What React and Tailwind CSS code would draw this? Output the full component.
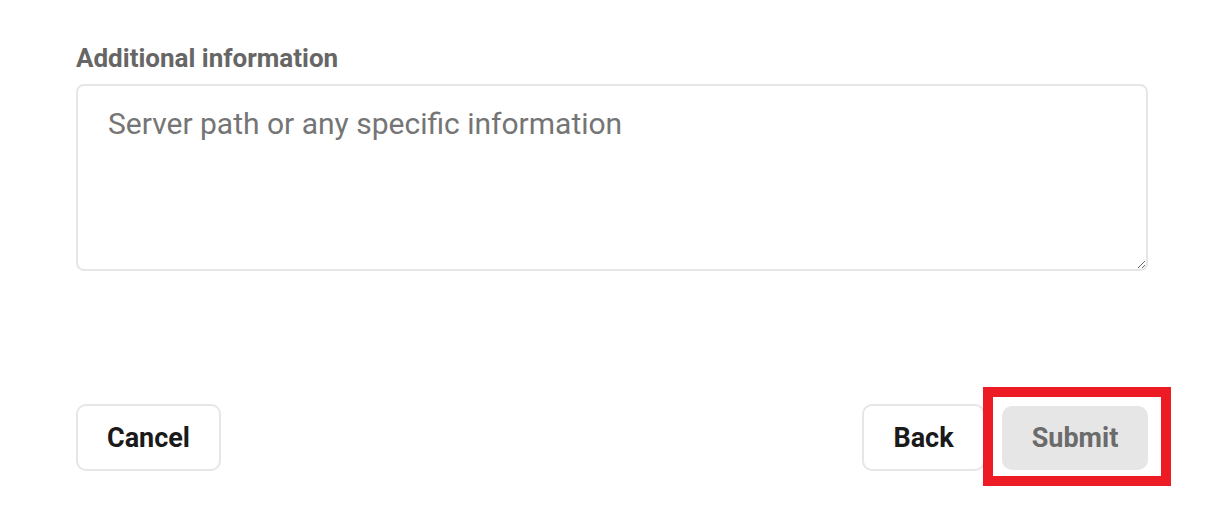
import React from "react";

export default function App() {
    return (
        <div
            className="w-[1220px] h-[529px] bg-white"
            style={{ fontFamily: "Roboto, 'Liberation Sans', sans-serif" }}
        >
            <div className="ml-[76px] w-[1072px] pt-[42px] flex flex-col">
                <label className="text-[26px] leading-[32px] font-bold text-[#666666]">
                    Additional information
                </label>
                <textarea
                    className="mt-[10px] h-[187px] w-full rounded-[8px] border-2 border-[#e6e6e6] px-[30px] py-[18px] text-[30px] leading-[40px] text-[#333] placeholder:text-[#757575] outline-none"
                    placeholder="Server path or any specific information"
                ></textarea>

                <div className="mt-[133px] flex items-center justify-between">
                    <button className="h-[67px] w-[145px] pt-[2px] rounded-[10px] border-2 border-[#e6e6e6] bg-white text-[27px] font-bold text-[#1a1a1a]">
                        Cancel
                    </button>
                    <div className="flex items-center">
                        <button className="h-[67px] w-[123px] pt-[2px] rounded-[10px] border-2 border-[#e6e6e6] bg-white text-[27px] font-bold text-[#1a1a1a]">
                            Back
                        </button>
                        <div className="relative ml-[17px]">
                            <button className="h-[64px] w-[146px] pt-[2px] rounded-[10px] bg-[#e6e6e6] text-[27px] font-bold text-[#6b6b6b]">
                                Submit
                            </button>
                            <div className="absolute left-[-19px] top-[-19px] h-[99px] w-[188px] border-[10px] border-[#ed1c24] pointer-events-none"></div>
                        </div>
                    </div>
                </div>
            </div>
        </div>
    );
}
